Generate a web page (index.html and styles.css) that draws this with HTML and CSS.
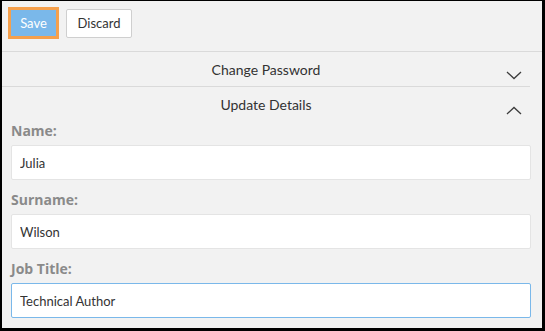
FILE: index.html
```html
<!DOCTYPE html>
<html lang="en">
<head>
    <meta charset="UTF-8">
    <meta name="viewport" content="width=device-width, initial-scale=1.0">
    <title>Profile - Update Details</title>
    <link rel="stylesheet" href="styles.css">
</head>
<body>
    <div class="frame">
        <!-- Toolbar -->
        <div class="toolbar">
            <button class="btn btn-save">Save</button>
            <button class="btn btn-discard">Discard</button>
        </div>

        <!-- Change Password (collapsed) -->
        <div class="panel-header panel-header-line">
            <span class="panel-title">Change Password</span>
            <svg class="chevron" width="16" height="9" viewBox="0 0 16 9">
                <polyline points="1,1 8,7.5 15,1" fill="none" stroke="#3c3c3c" stroke-width="1.3"/>
            </svg>
        </div>

        <!-- Update Details (open) -->
        <div class="panel-header">
            <span class="panel-title">Update Details</span>
            <svg class="chevron" width="16" height="9" viewBox="0 0 16 9">
                <polyline points="1,8 8,1.5 15,8" fill="none" stroke="#3c3c3c" stroke-width="1.3"/>
            </svg>
        </div>

        <form class="details-form">
            <label class="field-label" for="name">Name:</label>
            <input class="field-input" id="name" type="text" value="Julia">

            <label class="field-label" for="surname">Surname:</label>
            <input class="field-input" id="surname" type="text" value="Wilson">

            <label class="field-label" for="jobTitle">Job Title:</label>
            <input class="field-input field-focus" id="jobTitle" type="text" value="Technical Author">
        </form>
    </div>
</body>
</html>
```

FILE: styles.css
```css
* {
    margin: 0;
    padding: 0;
    box-sizing: border-box;
}

body {
    font-family: Lato, 'Open Sans', sans-serif;
    font-size: 14px;
    color: #333;
    background: #000;
}

.frame {
    width: 545px;
    height: 331px;
    background: #f2f2f2;
    border-top: 1px solid #000;
    border-left: 2px solid #000;
    border-right: 3px solid #000;
    border-bottom: 3px solid #000;
    overflow: hidden;
}

/* Toolbar */
.toolbar {
    display: flex;
    align-items: center;
    gap: 7px;
    height: 51px;
    padding: 6px 6px 12px;
    border-bottom: 1px solid #dadada;
}

.btn {
    font-family: Lato, sans-serif;
    font-size: 13px;
    cursor: pointer;
}

.btn-save {
    width: 51px;
    height: 32px;
    background: #7ab8ea;
    color: #fff;
    border: 3px solid #f5a04c;
}

.btn-discard {
    width: 66px;
    height: 29px;
    background: #fff;
    color: #333;
    border: 1px solid #cfcfcf;
    border-radius: 2px;
}

/* Accordion headers */
.panel-header {
    display: grid;
    grid-template-columns: 1fr auto 1fr;
    width: 528px;
    height: 34px;
    padding: 9px 8px 6px;
}

.panel-header-line {
    border-bottom: 1px solid #dadada;
    height: 35px;
}

.panel-title {
    grid-column: 2;
    line-height: 17px;
    color: #333;
}

.chevron {
    grid-column: 3;
    justify-self: end;
    align-self: end;
}

/* Form */
.details-form {
    display: flex;
    flex-direction: column;
    padding: 0 11px 0 9px;
}

.field-label {
    font-family: 'Open Sans', sans-serif;
    font-weight: 700;
    font-size: 14px;
    color: #8a8a8a;
    line-height: 20px;
    margin-bottom: 4px;
}

.field-input + .field-label {
    margin-top: 10px;
}

.field-input {
    height: 35px;
    width: 100%;
    border: 1px solid #e4e4e4;
    border-radius: 2px;
    background: #fff;
    padding: 0 8px;
    font-family: Lato, sans-serif;
    font-size: 13px;
    color: #333;
    outline: none;
}

.field-focus {
    border-color: #7ab8ea;
}
```
